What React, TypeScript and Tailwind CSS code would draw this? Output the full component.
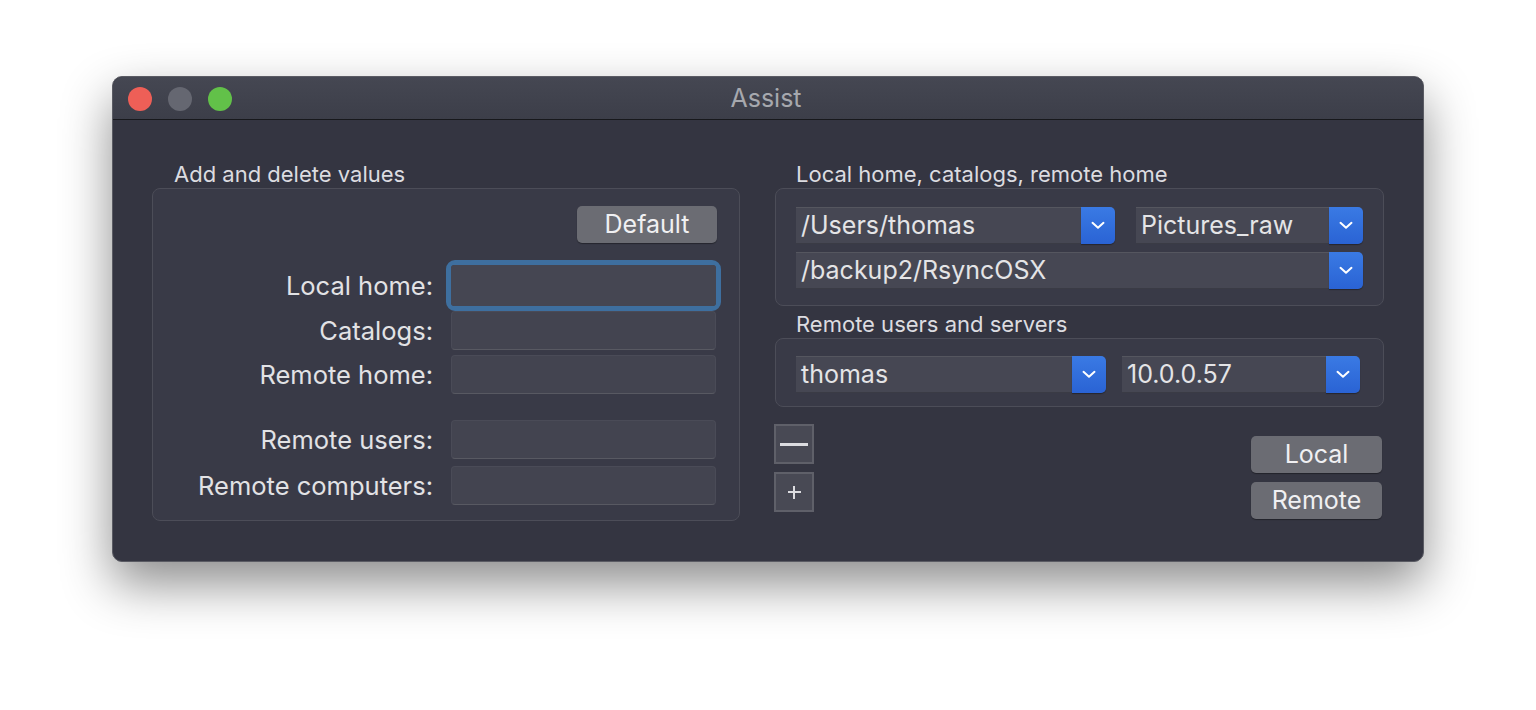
import React from 'react';

const font = { fontFamily: 'Inter, "Noto Sans", "Liberation Sans", sans-serif' };

function Chevron() {
  return (
    <svg width="14" height="9" viewBox="0 0 14 9" fill="none">
      <path d="M1.5 1.8l5.5 5 5.5-5" stroke="white" strokeWidth="2" strokeLinecap="round" strokeLinejoin="round" />
    </svg>
  );
}

function Combo({ value, width, height = 37 }: { value: string; width: number; height?: number }) {
  return (
    <div className="flex shrink-0" style={{ width, height }}>
      <div className="flex-1 flex items-center pl-[5px] bg-[#464753] border-t border-[#55565f] border-b border-b-[#3a3b45] text-[25px] text-[#e4e4e6] leading-none">
        {value}
      </div>
      <div className="w-[34px] flex items-center justify-center rounded-r-[5px] bg-gradient-to-b from-[#3a7ae4] to-[#2a63d4] shadow-[0_1px_1px_rgba(0,0,0,0.35)]">
        <Chevron />
      </div>
    </div>
  );
}

function Field({ focus }: { focus?: boolean }) {
  if (focus) {
    return (
      <div className="w-[275px] h-[51px] -ml-[5px] -mr-[5px] rounded-[9px] border-[5px] border-[#3e6f9f]">
        <div className="w-full h-full rounded-[3px] bg-[#454652]" />
      </div>
    );
  }
  return <div className="w-[265px] h-[39px] rounded-[4px] bg-[#434450] border border-[#4a4b57] border-b-[#585962]" />;
}

function Row({ label, focus, className }: { label: string; focus?: boolean; className?: string }) {
  return (
    <div className={'flex items-center ' + (className ?? '')}>
      <div className="w-[298px] text-right pr-[18px] text-[25.5px] text-[#e2e2e5] leading-none whitespace-nowrap">{label}</div>
      <Field focus={focus} />
    </div>
  );
}

function GrayButton({ label, className }: { label: string; className?: string }) {
  return (
    <div
      className={
        'h-[37px] w-[131px] rounded-[5px] bg-[#6b6c73] flex items-center justify-center text-[25px] text-[#f0f0f2] leading-none shadow-[0_1px_1px_rgba(0,0,0,0.35)] ' +
        (className ?? '')
      }
    >
      {label}
    </div>
  );
}

export default function App() {
  return (
    <div className="w-[1536px] h-[710px] bg-white flex justify-center pt-[76px]" style={font}>
      <div className="w-[1312px] h-[486px] rounded-[10px] bg-[#343541] border border-[#5a5b63] overflow-hidden flex flex-col shadow-[0_22px_50px_rgba(0,0,0,0.45)]">
        {/* Title bar */}
        <div className="h-[43px] shrink-0 relative flex items-center bg-gradient-to-b from-[#454752] to-[#3c3e49] border-b border-[#17181c]">
          <div className="flex items-center gap-[16px] pl-[15px] pt-[1px]">
            <span className="w-[24px] h-[24px] rounded-full bg-[#ee5f57]" />
            <span className="w-[24px] h-[24px] rounded-full bg-[#656771]" />
            <span className="w-[24px] h-[24px] rounded-full bg-[#62c149]" />
          </div>
          <div className="absolute inset-0 flex items-center justify-center pr-[4px] pt-[2px] text-[25px] text-[#a6a8ae]">Assist</div>
        </div>

        {/* Body */}
        <div className="flex pl-[39px] pt-[43px] gap-[35px]">
          {/* Left group */}
          <div className="w-[588px] flex flex-col">
            <div className="pl-[22px] h-[25px] text-[22px] text-[#dcdce0] leading-none">Add and delete values</div>
            <div className="h-[333px] rounded-[8px] bg-[#393a47] border border-[#4c4d58] flex flex-col pt-[17px] pr-[22px]">
              <div className="flex justify-end">
                <GrayButton label="Default" className="w-[140px]" />
              </div>
              <Row label="Local home:" focus className="mt-[17px]" />
              <Row label="Catalogs:" className="mt-[0px]" />
              <Row label="Remote home:" className="mt-[5px]" />
              <Row label="Remote users:" className="mt-[26px]" />
              <Row label="Remote computers:" className="mt-[7px]" />
            </div>
          </div>

          {/* Right group */}
          <div className="w-[609px] flex flex-col">
            <div className="pl-[21px] h-[25px] text-[22px] text-[#dcdce0] leading-none">Local home, catalogs, remote home</div>
            <div className="h-[118px] rounded-[8px] bg-[#393a47] border border-[#4c4d58] flex flex-col gap-[8px] pt-[18px] pl-[20px]">
              <div className="flex gap-[21px]">
                <Combo value="/Users/thomas" width={319} />
                <Combo value="Pictures_raw" width={227} />
              </div>
              <Combo value="/backup2/RsyncOSX" width={567} />
            </div>

            <div className="pl-[21px] h-[25px] mt-[7px] text-[22px] text-[#dcdce0] leading-none">Remote users and servers</div>
            <div className="h-[69px] rounded-[8px] bg-[#393a47] border border-[#4c4d58] flex items-center gap-[16px] pl-[20px] pt-[3px]">
              <Combo value="thomas" width={310} />
              <Combo value="10.0.0.57" width={238} />
            </div>

            <div className="flex justify-between mt-[17px] pr-[2px]">
              <div className="flex flex-col gap-[8px] -ml-[1px]">
                <div className="w-[40px] h-[40px] bg-[#484954] border-2 border-[#5f6069] flex items-center justify-center">
                  <span className="w-[28px] h-[3px] bg-[#dcdce0]" />
                </div>
                <div className="w-[40px] h-[40px] bg-[#484954] border-2 border-[#5f6069] flex items-center justify-center relative">
                  <span className="absolute w-[13px] h-[2px] bg-[#dcdce0]" />
                  <span className="absolute w-[2px] h-[13px] bg-[#dcdce0]" />
                </div>
              </div>
              <div className="flex flex-col gap-[9px] pt-[12px]">
                <GrayButton label="Local" />
                <GrayButton label="Remote" />
              </div>
            </div>
          </div>
        </div>
      </div>
    </div>
  );
}
